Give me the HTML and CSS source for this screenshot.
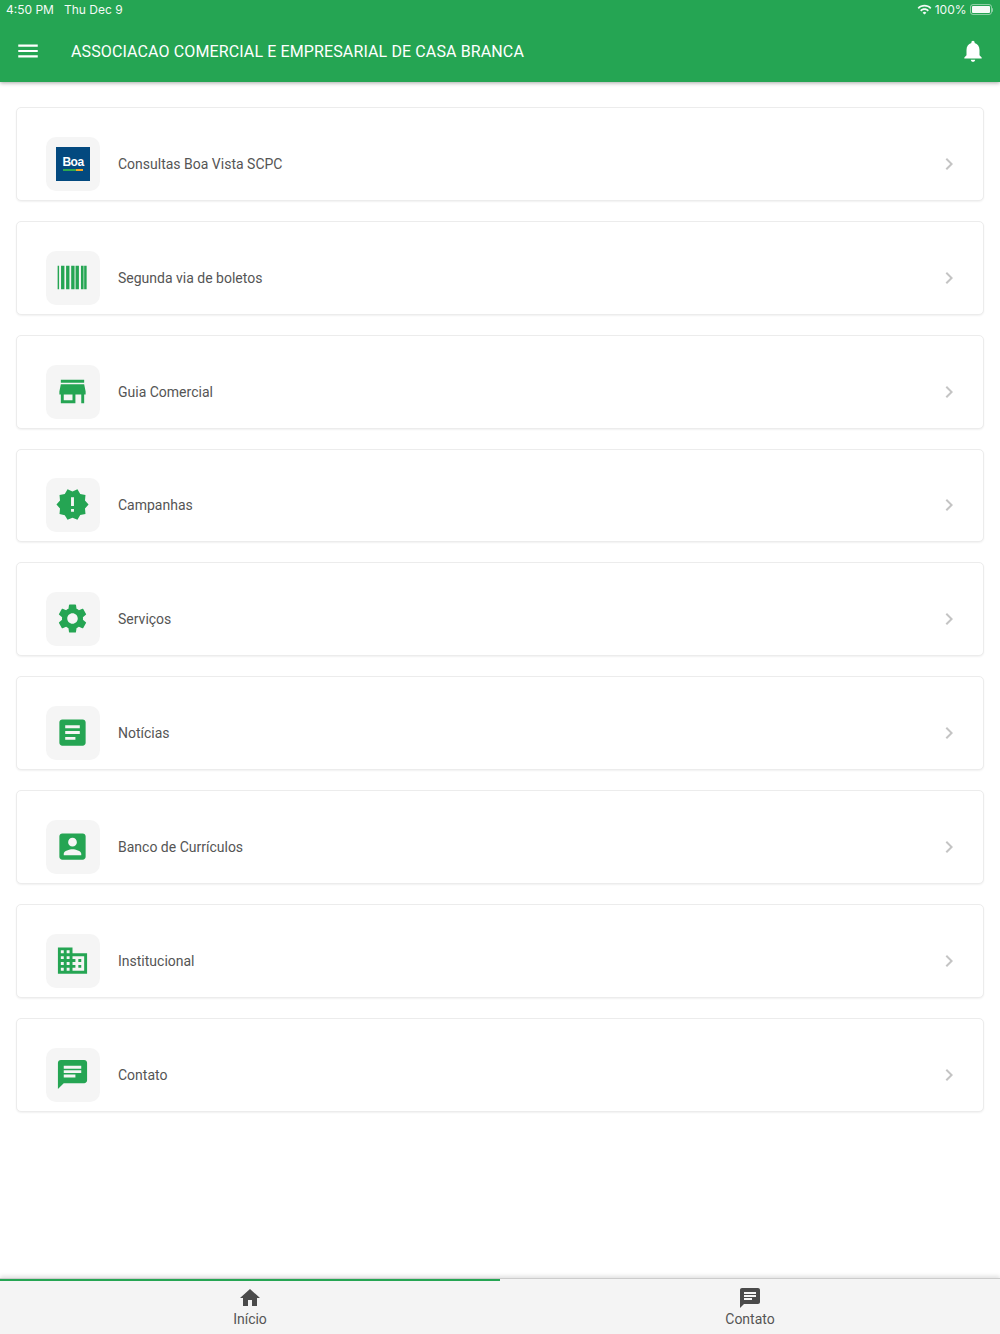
FILE: index.html
```html
<!DOCTYPE html>
<html>
<head>
<meta charset="utf-8">
<title>Associacao Comercial</title>
<link rel="stylesheet" href="styles.css">
</head>
<body>

<header class="header">
  <div class="status-bar">
    <span class="status-time">4:50 PM</span>
    <span class="status-date">Thu Dec 9</span>
    <svg class="status-wifi" viewBox="0 0 24 24"><path d="M1 9l2 2c4.97-4.97 13.03-4.97 18 0l2-2C16.93 2.93 7.08 2.93 1 9zm8 8l3 3 3-3c-1.65-1.66-4.34-1.66-6 0zm-4-4l2 2c2.76-2.76 7.24-2.76 10 0l2-2C15.14 9.14 8.87 9.14 5 13z"/></svg>
    <span class="status-level">100%</span>
    <span class="battery"><span class="battery-fill"></span></span>
    <span class="battery-nub"></span>
  </div>
  <div class="toolbar">
    <svg class="toolbar-icon" viewBox="0 0 24 24"><path d="M3 18h18v-2H3v2zm0-5h18v-2H3v2zm0-7v2h18V6H3z"/></svg>
    <h1 class="title">ASSOCIACAO COMERCIAL E EMPRESARIAL DE CASA BRANCA</h1>
    <svg class="toolbar-icon" viewBox="0 0 24 24"><path d="M12 22c1.1 0 2-.9 2-2h-4c0 1.1.89 2 2 2zm6-6v-5c0-3.07-1.64-5.64-4.5-6.32V4c0-.83-.67-1.5-1.5-1.5s-1.5.67-1.5 1.5v.68C7.63 5.36 6 7.92 6 11v5l-2 2v1h16v-1l-2-2z"/></svg>
  </div>
</header>

<main class="menu">
  <a class="card">
    <span class="tile">
      <span class="logo">
        <span class="logo-text">Boa</span>
        <span class="logo-bar"><span class="logo-green"></span><span class="logo-orange"></span></span>
      </span>
    </span>
    <span class="label">Consultas Boa Vista SCPC</span>
    <svg class="chevron" viewBox="0 0 24 24"><path d="M10 6L8.59 7.41 13.17 12l-4.58 4.59L10 18l6-6z"/></svg>
  </a>
  <a class="card">
    <span class="tile">
      <svg class="icon" viewBox="0 0 24 24"><path d="M1.800 4h1v16h-1zM4.150 4h2.300v16h-2.300zM7.600 4h2.300v16H7.600zM11.100 4h2.300v16h-2.300zM14.100 4h2.300v16h-2.300zM17.800 4h1.800v16h-1.800zM20 4h1.700v16H20z"/></svg>
    </span>
    <span class="label">Segunda via de boletos</span>
    <svg class="chevron" viewBox="0 0 24 24"><path d="M10 6L8.59 7.41 13.17 12l-4.58 4.59L10 18l6-6z"/></svg>
  </a>
  <a class="card">
    <span class="tile">
      <svg class="icon" viewBox="0 0 24 24"><path d="M20 4H4v2h16V4zm1 10v-2l-1-5H4l-1 5v2h1v6h10v-6h4v6h2v-6h1zm-9 4H6v-4h6v4z"/></svg>
    </span>
    <span class="label">Guia Comercial</span>
    <svg class="chevron" viewBox="0 0 24 24"><path d="M10 6L8.59 7.41 13.17 12l-4.58 4.59L10 18l6-6z"/></svg>
  </a>
  <a class="card">
    <span class="tile">
      <svg class="icon" viewBox="0 0 24 24"><path d="M23 12l-2.44-2.78.34-3.68-3.61-.82-1.89-3.18L12 3 8.6 1.54 6.71 4.72l-3.61.81.34 3.68L1 12l2.44 2.78-.34 3.69 3.61.82 1.89 3.18L12 21l3.4 1.46 1.89-3.18 3.61-.82-.34-3.68L23 12zm-10 5h-2v-2h2v2zm0-4h-2V7h2v6z"/></svg>
    </span>
    <span class="label">Campanhas</span>
    <svg class="chevron" viewBox="0 0 24 24"><path d="M10 6L8.59 7.41 13.17 12l-4.58 4.59L10 18l6-6z"/></svg>
  </a>
  <a class="card">
    <span class="tile">
      <svg class="icon" viewBox="0 0 24 24"><path d="M19.14 12.94c.04-.3.06-.61.06-.94 0-.32-.02-.64-.07-.94l2.03-1.58c.18-.14.23-.41.12-.61l-1.92-3.32c-.12-.22-.37-.29-.59-.22l-2.39.96c-.5-.38-1.03-.7-1.62-.94l-.36-2.54c-.04-.24-.24-.41-.48-.41h-3.84c-.24 0-.43.17-.47.41l-.36 2.54c-.59.24-1.13.57-1.62.94l-2.39-.96c-.22-.08-.47 0-.59.22L2.74 8.87c-.12.21-.08.47.12.61l2.03 1.58c-.05.3-.09.63-.09.94s.02.64.07.94l-2.03 1.58c-.18.14-.23.41-.12.61l1.92 3.32c.12.22.37.29.59.22l2.39-.96c.5.38 1.03.7 1.62.94l.36 2.54c.05.24.24.41.48.41h3.84c.24 0 .44-.17.47-.41l.36-2.54c.59-.24 1.13-.56 1.62-.94l2.39.96c.22.08.47 0 .59-.22l1.92-3.32c.12-.22.07-.47-.12-.61l-2.01-1.58zM12 15.6c-1.98 0-3.6-1.62-3.6-3.6s1.62-3.6 3.6-3.6 3.6 1.62 3.6 3.6-1.62 3.6-3.6 3.6z"/></svg>
    </span>
    <span class="label">Serviços</span>
    <svg class="chevron" viewBox="0 0 24 24"><path d="M10 6L8.59 7.41 13.17 12l-4.58 4.59L10 18l6-6z"/></svg>
  </a>
  <a class="card">
    <span class="tile">
      <svg class="icon" viewBox="0 0 24 24"><path d="M19 3H5c-1.1 0-2 .9-2 2v14c0 1.1.9 2 2 2h14c1.1 0 2-.9 2-2V5c0-1.1-.9-2-2-2zm-5 14H7v-2h7v2zm3-4H7v-2h10v2zm0-4H7V7h10v2z"/></svg>
    </span>
    <span class="label">Notícias</span>
    <svg class="chevron" viewBox="0 0 24 24"><path d="M10 6L8.59 7.41 13.17 12l-4.58 4.59L10 18l6-6z"/></svg>
  </a>
  <a class="card">
    <span class="tile">
      <svg class="icon" viewBox="0 0 24 24"><path d="M3 5v14c0 1.1.89 2 2 2h14c1.1 0 2-.9 2-2V5c0-1.1-.9-2-2-2H5c-1.11 0-2 .9-2 2zm12 4c0 1.66-1.34 3-3 3s-3-1.34-3-3 1.34-3 3-3 3 1.34 3 3zm-9 8c0-2 4-3.1 6-3.1s6 1.1 6 3.1v1H6v-1z"/></svg>
    </span>
    <span class="label">Banco de Currículos</span>
    <svg class="chevron" viewBox="0 0 24 24"><path d="M10 6L8.59 7.41 13.17 12l-4.58 4.59L10 18l6-6z"/></svg>
  </a>
  <a class="card">
    <span class="tile">
      <svg class="icon" viewBox="0 0 24 24"><path d="M12 7V3H2v18h20V7H12zM6 19H4v-2h2v2zm0-4H4v-2h2v2zm0-4H4V9h2v2zm0-4H4V5h2v2zm4 12H8v-2h2v2zm0-4H8v-2h2v2zm0-4H8V9h2v2zm0-4H8V5h2v2zm10 12h-8v-2h2v-2h-2v-2h2v-2h-2V9h8v10zm-2-8h-2v2h2v-2zm0 4h-2v2h2v-2z"/></svg>
    </span>
    <span class="label">Institucional</span>
    <svg class="chevron" viewBox="0 0 24 24"><path d="M10 6L8.59 7.41 13.17 12l-4.58 4.59L10 18l6-6z"/></svg>
  </a>
  <a class="card">
    <span class="tile">
      <svg class="icon" viewBox="0 0 24 24"><path d="M20 2H4c-1.1 0-1.99.9-1.99 2L2 22l4-4h14c1.1 0 2-.9 2-2V4c0-1.1-.9-2-2-2zM6 9h12v2H6V9zm8 5H6v-2h8v2zm4-6H6V6h12v2z"/></svg>
    </span>
    <span class="label">Contato</span>
    <svg class="chevron" viewBox="0 0 24 24"><path d="M10 6L8.59 7.41 13.17 12l-4.58 4.59L10 18l6-6z"/></svg>
  </a>
</main>

<footer class="tabs">
  <a class="tab tab-active">
    <svg class="tab-icon" viewBox="0 0 24 24"><path d="M10 20v-6h4v6h5v-8h3L12 3 2 12h3v8z"/></svg>
    <span>Início</span>
  </a>
  <a class="tab">
    <svg class="tab-icon" viewBox="0 0 24 24"><path d="M20 2H4c-1.1 0-1.99.9-1.99 2L2 22l4-4h14c1.1 0 2-.9 2-2V4c0-1.1-.9-2-2-2zM6 9h12v2H6V9zm8 5H6v-2h8v2zm4-6H6V6h12v2z"/></svg>
    <span>Contato</span>
  </a>
</footer>

</body>
</html>
```

FILE: styles.css
```css
* {
  box-sizing: border-box;
}

body {
  display: flex;
  flex-direction: column;
  height: 100vh;
  margin: 0;
  background-color: #fff;
  font-family: Roboto, Arial, sans-serif;
  overflow: hidden;
}

.header {
  height: 82px;
  flex-shrink: 0;
  background-color: #25a553;
  color: #fff;
  box-shadow: 0px 1px 4px rgba(0, 0, 0, 0.35);
  position: relative;
}

.status-bar {
  display: flex;
  align-items: center;
  height: 20px;
  padding: 0 7px 1px 6px;
  font-family: Inter, Arial, sans-serif;
  font-size: 12px;
  opacity: 0.95;
}

.status-date {
  margin-left: 10px;
  flex: 1;
}

.status-wifi {
  width: 15px;
  height: 15px;
  fill: #fff;
  margin-right: 3px;
}

.status-level {
  margin-right: 3px;
}

.battery {
  display: block;
  width: 22px;
  height: 11px;
  padding: 1px;
  border: 1px solid rgba(255, 255, 255, 0.5);
  border-radius: 3px;
}

.battery-fill {
  display: block;
  height: 100%;
  background-color: #fff;
  border-radius: 1px;
}

.battery-nub {
  display: block;
  width: 1.5px;
  height: 4px;
  background-color: rgba(255, 255, 255, 0.5);
  border-radius: 0 1px 1px 0;
}

.toolbar {
  display: flex;
  align-items: center;
  height: 62px;
  padding: 0 14px 0 15px;
}

.toolbar-icon {
  width: 26px;
  height: 26px;
  fill: #fff;
  flex-shrink: 0;
}

.title {
  flex: 1;
  margin: 0 0 0 30px;
  font-size: 16px;
  font-weight: 400;
  letter-spacing: 0.12px;
}

.menu {
  flex: 1;
  display: flex;
  flex-direction: column;
  gap: 20px;
  padding: 25px 16px 0;
}

.card {
  display: flex;
  align-items: center;
  height: 93.85px;
  padding: 20px 22px 0 29px;
  background-color: #fff;
  border: 1px solid #ececec;
  border-radius: 5px;
  box-shadow: 0px 1px 2px rgba(0, 0, 0, 0.06);
}

.tile {
  display: flex;
  justify-content: center;
  align-items: center;
  width: 54px;
  height: 54px;
  flex-shrink: 0;
  background-color: #f5f5f5;
  border-radius: 10px;
}

.icon {
  width: 35px;
  height: 35px;
  margin: 0 1px 1px 0;
  fill: #25a553;
}

.logo {
  display: flex;
  flex-direction: column;
  align-items: center;
  justify-content: center;
  width: 34px;
  height: 34px;
  background-color: #03497f;
}

.logo-text {
  font-family: "Liberation Sans", Arial, sans-serif;
  font-size: 12px;
  font-weight: 700;
  line-height: 11px;
  letter-spacing: -0.5px;
  color: #fff;
}

.logo-bar {
  display: flex;
  width: 20px;
  height: 2px;
  margin-top: 1px;
}

.logo-green {
  flex: 2;
  background-color: #2fa84f;
}

.logo-orange {
  flex: 1;
  background-color: #f5a623;
}

.label {
  flex: 1;
  margin-left: 18px;
  font-size: 14px;
  color: #555;
}

.chevron {
  width: 24px;
  height: 24px;
  fill: #c4c4c4;
}

.tabs {
  display: flex;
  height: 56px;
  flex-shrink: 0;
  background-color: #f4f4f4;
  border-top: 1px solid #ccc;
  box-shadow: 0px -2px 4px rgba(0, 0, 0, 0.12);
}

.tab {
  flex: 1;
  display: flex;
  flex-direction: column;
  align-items: center;
  padding-top: 5px;
  border-top: 2px solid transparent;
  font-size: 14px;
  color: #555;
}

.tab-active {
  border-top-color: #25a553;
}

.tab-icon {
  width: 24px;
  height: 24px;
  fill: #4a4a4a;
  margin-bottom: 1px;
}
```
